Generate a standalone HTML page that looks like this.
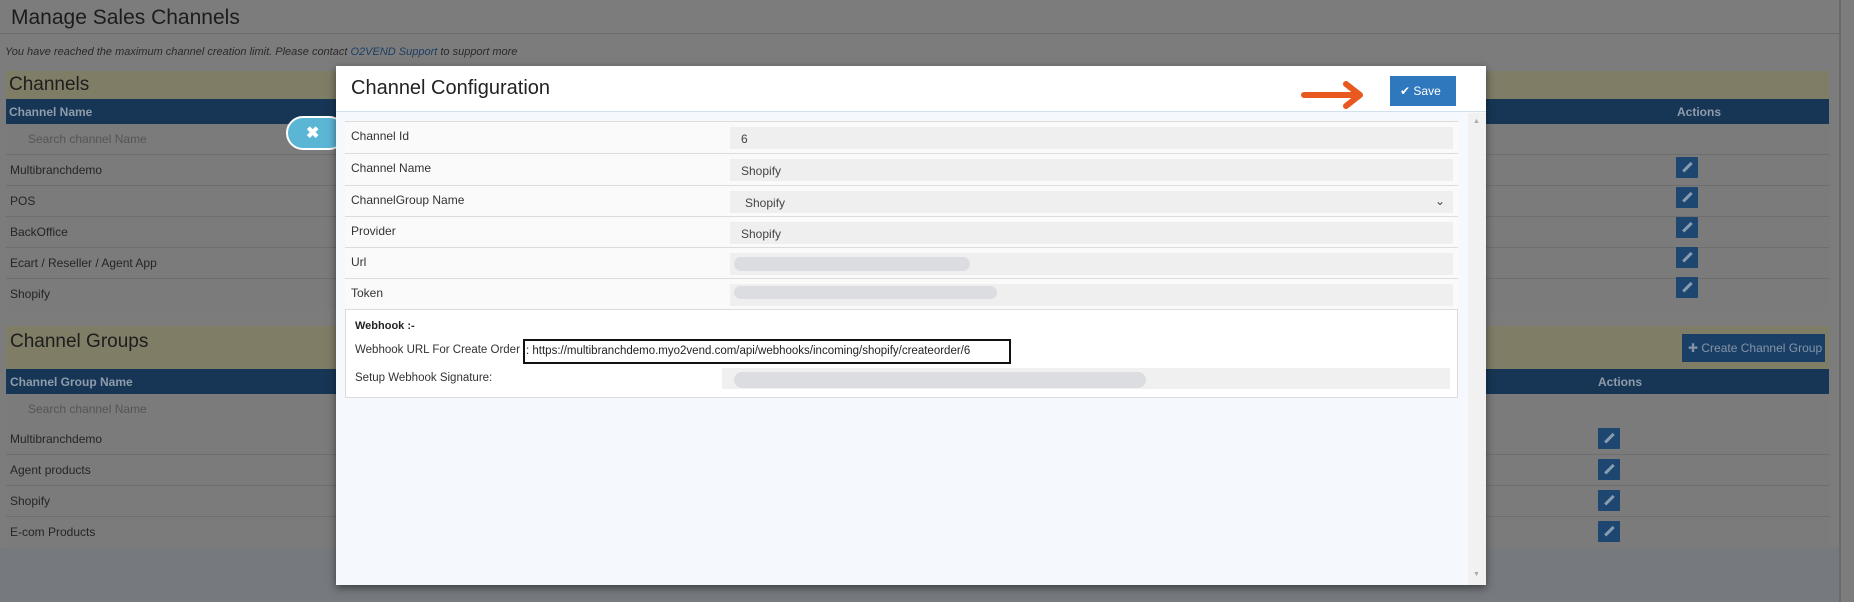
<!DOCTYPE html>
<html><head><meta charset="utf-8"><style>
*{box-sizing:border-box;margin:0;padding:0}
body{width:1854px;height:602px;overflow:hidden;background:#7c7c7c;font-family:"Liberation Sans",sans-serif;position:relative;color:#1e1e1e}
.a{position:absolute}
.t{font-size:12px;color:#232323}
.row{position:absolute;left:6px;width:1823px;height:31px;border-bottom:1px solid #6e6e6e;background:#7b7b7b}
.row span{position:absolute;left:4px;top:8px;font-size:12px;color:#252525}
.ed{position:absolute;width:22px;height:21px;background:#1d4670;border-radius:1px}
.ed:after{content:"";position:absolute;left:10px;top:4px;width:2.5px;height:12px;background:#8a9db0;transform:rotate(45deg)}
.fr{position:absolute;left:345px;width:1113px;border-bottom:1px solid #dcdcdc;background:#fafafa}
.fr .l{position:absolute;left:6px;top:7px;font-size:12px;color:#333}
.fr .i{position:absolute;left:385px;top:5px;width:723px;height:22px;background:#efefef;font-size:12px;color:#444;padding:5px 0 0 11px}
.pill{position:absolute;background:#dcdde0;border-radius:8px}
</style></head><body>
<div class="a" style="left:1839px;top:0;width:2px;height:602px;background:#6a6a6a"></div>
<div class="a" style="left:11px;top:6px;font-size:21px;color:#1c1c1c">Manage Sales Channels</div>
<div class="a" style="left:0;top:33px;width:1839px;height:1px;background:#6c6c6c"></div>
<div class="a" style="left:5px;top:46px;font-size:11px;font-style:italic;color:#2a2a2a">You have reached the maximum channel creation limit. Please contact <span style="color:#1c3e63">O2VEND Support</span> to support more</div>

<div class="a" style="left:6px;top:71px;width:1823px;height:28px;background:#7f7d66"></div>
<div class="a" style="left:9px;top:74px;font-size:19px;color:#1d1d1d">Channels</div>
<div class="a" style="left:6px;top:99px;width:1823px;height:25px;background:#173655"></div>
<div class="a" style="left:9px;top:105px;font-size:12px;font-weight:bold;color:#8e9cab">Channel Name</div>
<div class="a" style="left:1677px;top:105px;font-size:12px;font-weight:bold;color:#8e9cab">Actions</div>
<div class="row" style="top:124px"><span style="left:22px;color:#555">Search channel Name</span></div>
<div class="row" style="top:155px"><span>Multibranchdemo</span></div>
<div class="row" style="top:186px"><span>POS</span></div>
<div class="row" style="top:217px"><span>BackOffice</span></div>
<div class="row" style="top:248px"><span>Ecart / Reseller / Agent App</span></div>
<div class="row" style="top:279px;border:none"><span>Shopify</span></div>
<div class="ed" style="left:1676px;top:157px"></div>
<div class="ed" style="left:1676px;top:187px"></div>
<div class="ed" style="left:1676px;top:217px"></div>
<div class="ed" style="left:1676px;top:247px"></div>
<div class="ed" style="left:1676px;top:277px"></div>

<div class="a" style="left:6px;top:326px;width:1823px;height:43px;background:#7f7d66"></div>
<div class="a" style="left:10px;top:331px;font-size:19px;color:#1d1d1d">Channel Groups</div>
<div class="a" style="left:1682px;top:334px;width:143px;height:28px;background:#1a3f66;font-size:12px;color:#8494a6;padding:7px 0 0 6px">✚ Create Channel Group</div>
<div class="a" style="left:6px;top:369px;width:1823px;height:25px;background:#173655"></div>
<div class="a" style="left:10px;top:375px;font-size:12px;font-weight:bold;color:#8e9cab">Channel Group Name</div>
<div class="a" style="left:1598px;top:375px;font-size:12px;font-weight:bold;color:#8e9cab">Actions</div>
<div class="row" style="top:394px"><span style="left:22px;color:#555">Search channel Name</span></div>
<div class="row" style="top:424px"><span>Multibranchdemo</span></div>
<div class="row" style="top:455px"><span>Agent products</span></div>
<div class="row" style="top:486px"><span>Shopify</span></div>
<div class="row" style="top:517px;border:none"><span>E-com Products</span></div>
<div class="ed" style="left:1598px;top:428px"></div>
<div class="ed" style="left:1598px;top:459px"></div>
<div class="ed" style="left:1598px;top:490px"></div>
<div class="ed" style="left:1598px;top:521px"></div>
<div class="a" style="left:0;top:548px;width:1839px;height:54px;background:#767a7f"></div>

<div class="a" style="left:286px;top:116px;width:60px;height:34px;background:#5bb6d6;border:2px solid #fff;border-radius:17px;color:#fff;font-size:16px;font-weight:bold;padding:5px 0 0 18px">✖</div>

<div class="a" style="left:336px;top:66px;width:1150px;height:519px;background:#f5f9fd;box-shadow:0 3px 8px rgba(0,0,0,.5)">
 <div class="a" style="left:0;top:0;width:1150px;height:46px;background:#fff;border-bottom:1px solid #cfe0ee"></div>
 <div class="a" style="left:15px;top:11px;font-size:20px;color:#222">Channel Configuration</div>
 <svg class="a" style="left:964px;top:14px" width="72" height="30"><path d="M4 15H56" stroke="#e8591f" stroke-width="6" stroke-linecap="round"/><path d="M46 4L60 15L46 26" stroke="#e8591f" stroke-width="6" fill="none" stroke-linecap="round" stroke-linejoin="round"/></svg>
 <div class="a" style="left:1054px;top:10px;width:66px;height:30px;background:#2f78bd;color:#fff;font-size:12px;padding:8px 0 0 10px">✔ Save</div>
 <div class="a" style="left:1132px;top:47px;width:18px;height:472px;background:#f1f1f1"></div>
 <div class="a" style="left:1137px;top:52px;font-size:7px;color:#aaa">▲</div>
 <div class="a" style="left:1137px;top:505px;font-size:7px;color:#aaa">▼</div>
</div>
<div class="a" style="left:345px;top:121px;width:1113px;height:277px;border:1px solid #dcdcdc;background:#fff"></div>
<div class="fr" style="top:122px;height:32px"><span class="l">Channel Id</span><div class="i">6</div></div>
<div class="fr" style="top:154px;height:32px"><span class="l">Channel Name</span><div class="i">Shopify</div></div>
<div class="fr" style="top:186px;height:31px"><span class="l">ChannelGroup Name</span><div class="i" style="padding-left:15px">Shopify<span style="position:absolute;right:8px;top:3px;font-size:12px">&#8964;</span></div></div>
<div class="fr" style="top:217px;height:31px"><span class="l">Provider</span><div class="i">Shopify</div></div>
<div class="fr" style="top:248px;height:31px"><span class="l">Url</span><div class="i"></div></div>
<div class="fr" style="top:279px;height:31px"><span class="l">Token</span><div class="i"></div></div>
<div class="pill" style="left:734px;top:257px;width:236px;height:14px"></div>
<div class="pill" style="left:734px;top:286px;width:263px;height:13px"></div>
<div class="a t" style="left:355px;top:320px;font-weight:bold;font-size:11px">Webhook :-</div>
<div class="a t" style="left:355px;top:344px;font-size:11.5px;color:#333">Webhook URL For Create Order</div>
<div class="a" style="left:523px;top:339px;width:488px;height:25px;border:2px solid #111;font-size:11.5px;color:#222;padding:4px 0 0 1px;white-space:nowrap">: https://multibranchdemo.myo2vend.com/api/webhooks/incoming/shopify/createorder/6</div>
<div class="a t" style="left:355px;top:372px;font-size:11.5px;color:#333">Setup Webhook Signature:</div>
<div class="a" style="left:722px;top:368px;width:728px;height:21px;background:#f0f0f0"></div>
<div class="pill" style="left:734px;top:372px;width:412px;height:16px"></div>
</body></html>
